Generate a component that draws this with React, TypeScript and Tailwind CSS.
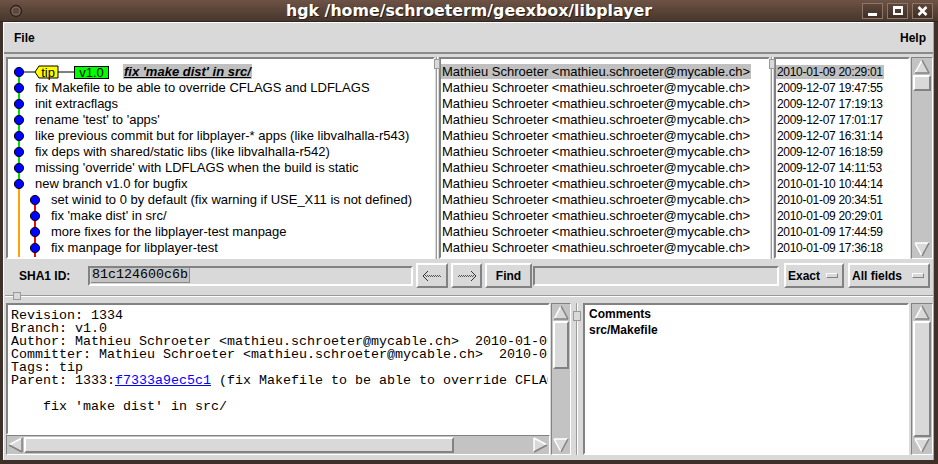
import React from 'react'

const sans = "font-['Liberation_Sans',Arial,sans-serif]"
const mono = "font-['Liberation_Mono','Courier_New',monospace]"
const sunken = 'border-2 border-t-[#828282] border-l-[#828282] border-b-white border-r-white'
const raised = 'border-2 border-t-white border-l-white border-b-[#828282] border-r-[#828282]'

const author = 'Mathieu Schroeter <mathieu.schroeter@mycable.ch>'

const commits = [
  { msg: "fix 'make dist' in src/", date: '2010-01-09 20:29:01', lane: 0 },
  { msg: 'fix Makefile to be able to override CFLAGS and LDFLAGS', date: '2009-12-07 19:47:55', lane: 0 },
  { msg: 'init extracflags', date: '2009-12-07 17:19:13', lane: 0 },
  { msg: "rename 'test' to 'apps'", date: '2009-12-07 17:01:17', lane: 0 },
  { msg: 'like previous commit but for libplayer-* apps (like libvalhalla-r543)', date: '2009-12-07 16:31:14', lane: 0 },
  { msg: 'fix deps with shared/static libs (like libvalhalla-r542)', date: '2009-12-07 16:18:59', lane: 0 },
  { msg: "missing 'override' with LDFLAGS when the build is static", date: '2009-12-07 14:11:53', lane: 0 },
  { msg: 'new branch v1.0 for bugfix', date: '2010-01-10 10:44:14', lane: 0 },
  { msg: 'set winid to 0 by default (fix warning if USE_X11 is not defined)', date: '2010-01-09 20:34:51', lane: 1 },
  { msg: "fix 'make dist' in src/", date: '2010-01-09 20:29:01', lane: 1 },
  { msg: 'more fixes for the libplayer-test manpage', date: '2010-01-09 17:44:59', lane: 1 },
  { msg: 'fix manpage for libplayer-test', date: '2010-01-09 17:36:18', lane: 1 },
]

const details = [
  'Revision: 1334',
  'Branch: v1.0',
  'Author: Mathieu Schroeter <mathieu.schroeter@mycable.ch>  2010-01-09 20:29:01',
  'Committer: Mathieu Schroeter <mathieu.schroeter@mycable.ch>  2010-01-09 20:29:01',
  'Tags: tip',
]

function Arrow({ dir }: { dir: 'up' | 'down' | 'left' | 'right' }) {
  // tk style 3d triangle
  if (dir === 'up')
    return (
      <svg width="16" height="15" className="block mx-auto">
        <polygon points="8,1 1,14 15,14" fill="#d9d9d9" />
        <line x1="8" y1="1" x2="1" y2="14" stroke="#fff" strokeWidth="1.5" />
        <line x1="8" y1="1" x2="15" y2="14" stroke="#828282" strokeWidth="1.5" />
        <line x1="1" y1="14" x2="15" y2="14" stroke="#828282" strokeWidth="1.5" />
      </svg>
    )
  if (dir === 'down')
    return (
      <svg width="16" height="15" className="block mx-auto">
        <polygon points="1,1 15,1 8,14" fill="#d9d9d9" />
        <line x1="1" y1="1" x2="15" y2="1" stroke="#fff" strokeWidth="1.5" />
        <line x1="1" y1="1" x2="8" y2="14" stroke="#fff" strokeWidth="1.5" />
        <line x1="15" y1="1" x2="8" y2="14" stroke="#828282" strokeWidth="1.5" />
      </svg>
    )
  if (dir === 'left')
    return (
      <svg width="15" height="16" className="block">
        <polygon points="1,8 14,1 14,15" fill="#d9d9d9" />
        <line x1="1" y1="8" x2="14" y2="1" stroke="#fff" strokeWidth="1.5" />
        <line x1="1" y1="8" x2="14" y2="15" stroke="#828282" strokeWidth="1.5" />
        <line x1="14" y1="1" x2="14" y2="15" stroke="#828282" strokeWidth="1.5" />
      </svg>
    )
  return (
    <svg width="15" height="16" className="block">
      <polygon points="1,1 14,8 1,15" fill="#d9d9d9" />
      <line x1="1" y1="1" x2="1" y2="15" stroke="#fff" strokeWidth="1.5" />
      <line x1="1" y1="1" x2="14" y2="8" stroke="#fff" strokeWidth="1.5" />
      <line x1="1" y1="15" x2="14" y2="8" stroke="#828282" strokeWidth="1.5" />
    </svg>
  )
}

function VScroll({ thumb, className }: { thumb: string; className: string }) {
  return (
    <div className={`flex flex-col bg-[#c3c3c3] border border-t-[#828282] border-l-[#828282] border-b-white border-r-white py-[1px] ${className}`}>
      <Arrow dir="up" />
      <div className="flex-1 flex flex-col min-h-0 px-[1px] py-[1px]">
        <div className={`bg-[#d9d9d9] ${raised} ${thumb}`} />
      </div>
      <Arrow dir="down" />
    </div>
  )
}

function Sash() {
  return (
    <div className="relative w-[4px] shrink-0">
      <div className="absolute left-[1px] top-0 bottom-0 w-[1px] bg-[#9a9a9a]" />
      <div className="absolute left-[2px] top-0 bottom-0 w-[1px] bg-white" />
      <div className="absolute left-[-1px] top-[2px] w-[6px] h-[10px] bg-[#d9d9d9] border border-[#9a9a9a]" />
    </div>
  )
}

function ShaftArrow({ left }: { left: boolean }) {
  return (
    <svg width="20" height="12" className={left ? '' : '-scale-x-100'}>
      <path d="M1 6 L6 1 M1 6 L6 11" stroke="#333" strokeWidth="1" fill="none" />
      <line x1="3" y1="5.5" x2="19" y2="5.5" stroke="#555" strokeDasharray="1 1" />
      <line x1="3" y1="6.5" x2="19" y2="6.5" stroke="#555" strokeDasharray="1 1" strokeDashoffset="1" />
    </svg>
  )
}

function TitleButton({ kind }: { kind: 'min' | 'max' | 'close' }) {
  return (
    <div className="w-[21px] h-[16px] border border-[#8f7565] bg-gradient-to-b from-[#5e4639] to-[#3f2f27] flex items-center justify-center">
      {kind === 'min' && <div className="w-[9px] h-[3px] bg-white mt-[7px]" />}
      {kind === 'max' && <div className="w-[10px] h-[9px] border-2 border-t-[3px] border-white" />}
      {kind === 'close' && (
        <svg width="11" height="10">
          <path d="M1.5 1 L9.5 9 M9.5 1 L1.5 9" stroke="#fff" strokeWidth="2.6" />
        </svg>
      )}
    </div>
  )
}

function MenuButton({ label, className }: { label: string; className: string }) {
  return (
    <div className={`h-[25px] bg-[#d9d9d9] ${raised} flex items-center justify-between pl-[2px] pr-[4px] ${className}`}>
      <span className="text-[12px] font-bold">{label}</span>
      <span className="w-[12px] h-[5px] border border-t-white border-l-white border-b-[#828282] border-r-[#828282] bg-[#d9d9d9]" />
    </div>
  )
}

export default function App() {
  return (
    <div className={`w-[938px] h-[464px] bg-[#3f3029] flex flex-col overflow-hidden ${sans} text-black`}>
      {/* title bar */}
      <div className="h-[22px] shrink-0 flex items-center bg-gradient-to-b from-[#6d5345] via-[#5a4437] to-[#47372e] border-b border-[#2f241e]">
        <div className="w-[76px] shrink-0 pl-[9px] flex items-center">
          <svg width="14" height="14">
            <circle cx="7" cy="7" r="5.5" fill="#5e473b" stroke="#2e221c" strokeWidth="1.3" />
            <circle cx="7" cy="7" r="4" fill="none" stroke="#8c7464" strokeWidth="0.8" />
          </svg>
        </div>
        <div className="flex-1 text-center text-white font-['DejaVu_Sans',sans-serif] font-bold text-[15.8px] leading-none [text-shadow:1px_1px_0_#2a1f19]">
          hgk /home/schroeterm/geexbox/libplayer
        </div>
        <div className="w-[76px] shrink-0 flex gap-[4px] pr-[5px]">
          <TitleButton kind="min" />
          <TitleButton kind="max" />
          <TitleButton kind="close" />
        </div>
      </div>

      {/* window body */}
      <div className="flex-1 ml-[3px] mr-[4px] mb-[4px] bg-[#d9d9d9] border-l border-l-white border-r border-r-[#a6a6a6] flex flex-col">
        {/* menubar */}
        <div className="h-[32px] shrink-0 border-t border-t-white border-b-2 border-b-[#8a8a8a] flex items-center justify-between pl-[10px] pr-[7px] text-[12px] font-bold">
          <span>File</span>
          <span>Help</span>
        </div>

        {/* commit list */}
        <div className="mt-[3px] h-[202px] shrink-0 flex pl-[2px]">
          <div className={`w-[429px] shrink-0 bg-white ${sunken} relative overflow-hidden`}>
            <svg className="absolute left-0 top-0" width="425" height="198">
              <line x1="11" y1="13" x2="11" y2="125" stroke="#00dd00" strokeWidth="2" />
              <line x1="11" y1="125" x2="11" y2="198" stroke="#ffa500" strokeWidth="2" />
              <line x1="27" y1="141" x2="27" y2="198" stroke="#ff0000" strokeWidth="2" />
              <line x1="11" y1="13" x2="27" y2="13" stroke="#000" strokeWidth="1" />
              <polygon points="27,13 31,7 50,7 50,19 31,19" fill="#ffff00" stroke="#000" strokeWidth="1" />
              <text x="40" y="17.5" textAnchor="middle" fontSize="13" fontFamily="Liberation Sans, Arial, sans-serif">tip</text>
              <line x1="50" y1="13" x2="66" y2="13" stroke="#000" strokeWidth="1" />
              <rect x="66.5" y="7.5" width="34" height="12" fill="#00ff00" stroke="#000" strokeWidth="1" />
              <text x="83.5" y="17.5" textAnchor="middle" fontSize="13" fontFamily="Liberation Sans, Arial, sans-serif">v1.0</text>
              {commits.map((c, i) => (
                <circle key={i} cx={c.lane ? 27 : 11} cy={13 + i * 16} r="4.6" fill="#0000ff" stroke="#000" strokeWidth="1" />
              ))}
            </svg>
            <div className="relative pt-[5px] text-[13px]">
              {commits.map((c, i) => (
                <div key={i} className={`h-[16px] leading-[16px] whitespace-nowrap ${i === 0 ? 'pl-[115px]' : c.lane ? 'pl-[43px]' : 'pl-[27px]'}`}>
                  {i === 0 ? (
                    <span className="bg-[#c0c0c0] font-bold italic underline px-[1px]">{c.msg}</span>
                  ) : (
                    c.msg
                  )}
                </div>
              ))}
            </div>
          </div>
          <Sash />
          <div className={`w-[331px] shrink-0 bg-white ${sunken} pt-[5px] text-[13px] overflow-hidden`}>
            {commits.map((c, i) => (
              <div key={i} className="h-[16px] leading-[16px] whitespace-nowrap">
                <span className={`px-[1px] ${i === 0 ? 'bg-[#c0c0c0]' : ''}`}>{author}</span>
              </div>
            ))}
          </div>
          <Sash />
          <div className={`w-[136px] shrink-0 bg-white ${sunken} pt-[5px] text-[12px] tracking-[-0.3px] overflow-hidden`}>
            {commits.map((c, i) => (
              <div key={i} className="h-[16px] leading-[16px] whitespace-nowrap">
                <span className={`px-[1px] ${i === 0 ? 'bg-[#c0c0c0]' : ''}`}>{c.date}</span>
              </div>
            ))}
          </div>
          <VScroll className="w-[22px] ml-[1px]" thumb="h-[16px]" />
        </div>

        {/* sha1 / find row */}
        <div className="mt-[4px] h-[25px] shrink-0 flex items-center">
          <span className="ml-[15px] w-[69px] text-[12px] font-bold">SHA1 ID:</span>
          <div className={`w-[325px] h-[20px] bg-[#d9d9d9] ${sunken} flex items-center pl-[1px]`}>
            <span className={`${mono} text-[13.333px] leading-[14px] bg-[#c3c3c3] border-b border-r border-[#8a8a8a] px-[1px]`}>81c124600c6b</span>
          </div>
          <div className={`ml-[3px] w-[32px] h-[25px] ${raised} flex items-center justify-center`}>
            <ShaftArrow left />
          </div>
          <div className={`ml-[3px] w-[31px] h-[25px] ${raised} flex items-center justify-center`}>
            <ShaftArrow left={false} />
          </div>
          <div className={`ml-[3px] w-[47px] h-[25px] ${raised} flex items-center justify-center text-[12px] font-bold`}>Find</div>
          <div className={`ml-[1px] w-[246px] h-[20px] bg-[#d9d9d9] ${sunken}`} />
          <MenuButton label="Exact" className="ml-[5px] w-[60px]" />
          <MenuButton label="All fields" className="ml-[4px] w-[82px]" />
        </div>

        {/* horizontal sash */}
        <div className="relative h-[15px] shrink-0">
          <div className="absolute left-[1px] right-0 top-[7px] h-[1px] bg-[#9a9a9a]" />
          <div className="absolute left-[1px] right-0 top-[8px] h-[1px] bg-white" />
          <div className="absolute left-[9px] top-[4px] w-[8px] h-[8px] bg-[#d9d9d9] border border-[#9a9a9a]" />
        </div>

        {/* lower panes */}
        <div className="h-[152px] shrink-0 flex pl-[2px]">
          <div className="w-[544px] shrink-0 flex flex-col">
            <div className={`flex-1 min-h-0 bg-white ${sunken} pt-[4px] pl-[3px] overflow-hidden ${mono} text-[13.333px] leading-[13px]`}>
              {details.map(l => (
                <div key={l} className="h-[13px] whitespace-pre">{l}</div>
              ))}
              <div className="h-[13px] whitespace-pre">
                {'Parent: 1333:'}
                <span className="text-[#0000ff] underline">f7333a9ec5c1</span>
                {' (fix Makefile to be able to override CFLAGS and LDFLAGS)'}
              </div>
              <div className="h-[13px]" />
              <div className="h-[13px] whitespace-pre">{'    fix \'make dist\' in src/'}</div>
            </div>
            <div className="h-[20px] shrink-0 flex items-center bg-[#c3c3c3] border border-t-[#828282] border-l-[#828282] border-b-white border-r-white px-[1px]">
              <Arrow dir="left" />
              <div className="flex-1 h-full py-[1px] px-[1px]">
                <div className={`h-full w-[430px] bg-[#d9d9d9] ${raised}`} />
              </div>
              <Arrow dir="right" />
            </div>
          </div>
          <VScroll className="w-[20px] ml-[1px]" thumb="h-[48px]" />
          <div className="relative w-[12px] shrink-0">
            <div className="absolute left-[5px] top-0 bottom-0 w-[1px] bg-[#9a9a9a]" />
            <div className="absolute left-[6px] top-0 bottom-0 w-[1px] bg-white" />
            <div className="absolute left-[2px] top-[8px] w-[8px] h-[10px] bg-[#d9d9d9] border border-[#9a9a9a]" />
          </div>
          <div className={`w-[326px] shrink-0 bg-white ${sunken} pt-[1px] pl-[4px] text-[12px] font-bold leading-[16px]`}>
            <div>Comments</div>
            <div>src/Makefile</div>
          </div>
          <VScroll className="w-[22px] ml-[2px]" thumb="flex-1" />
        </div>
      </div>
    </div>
  )
}
